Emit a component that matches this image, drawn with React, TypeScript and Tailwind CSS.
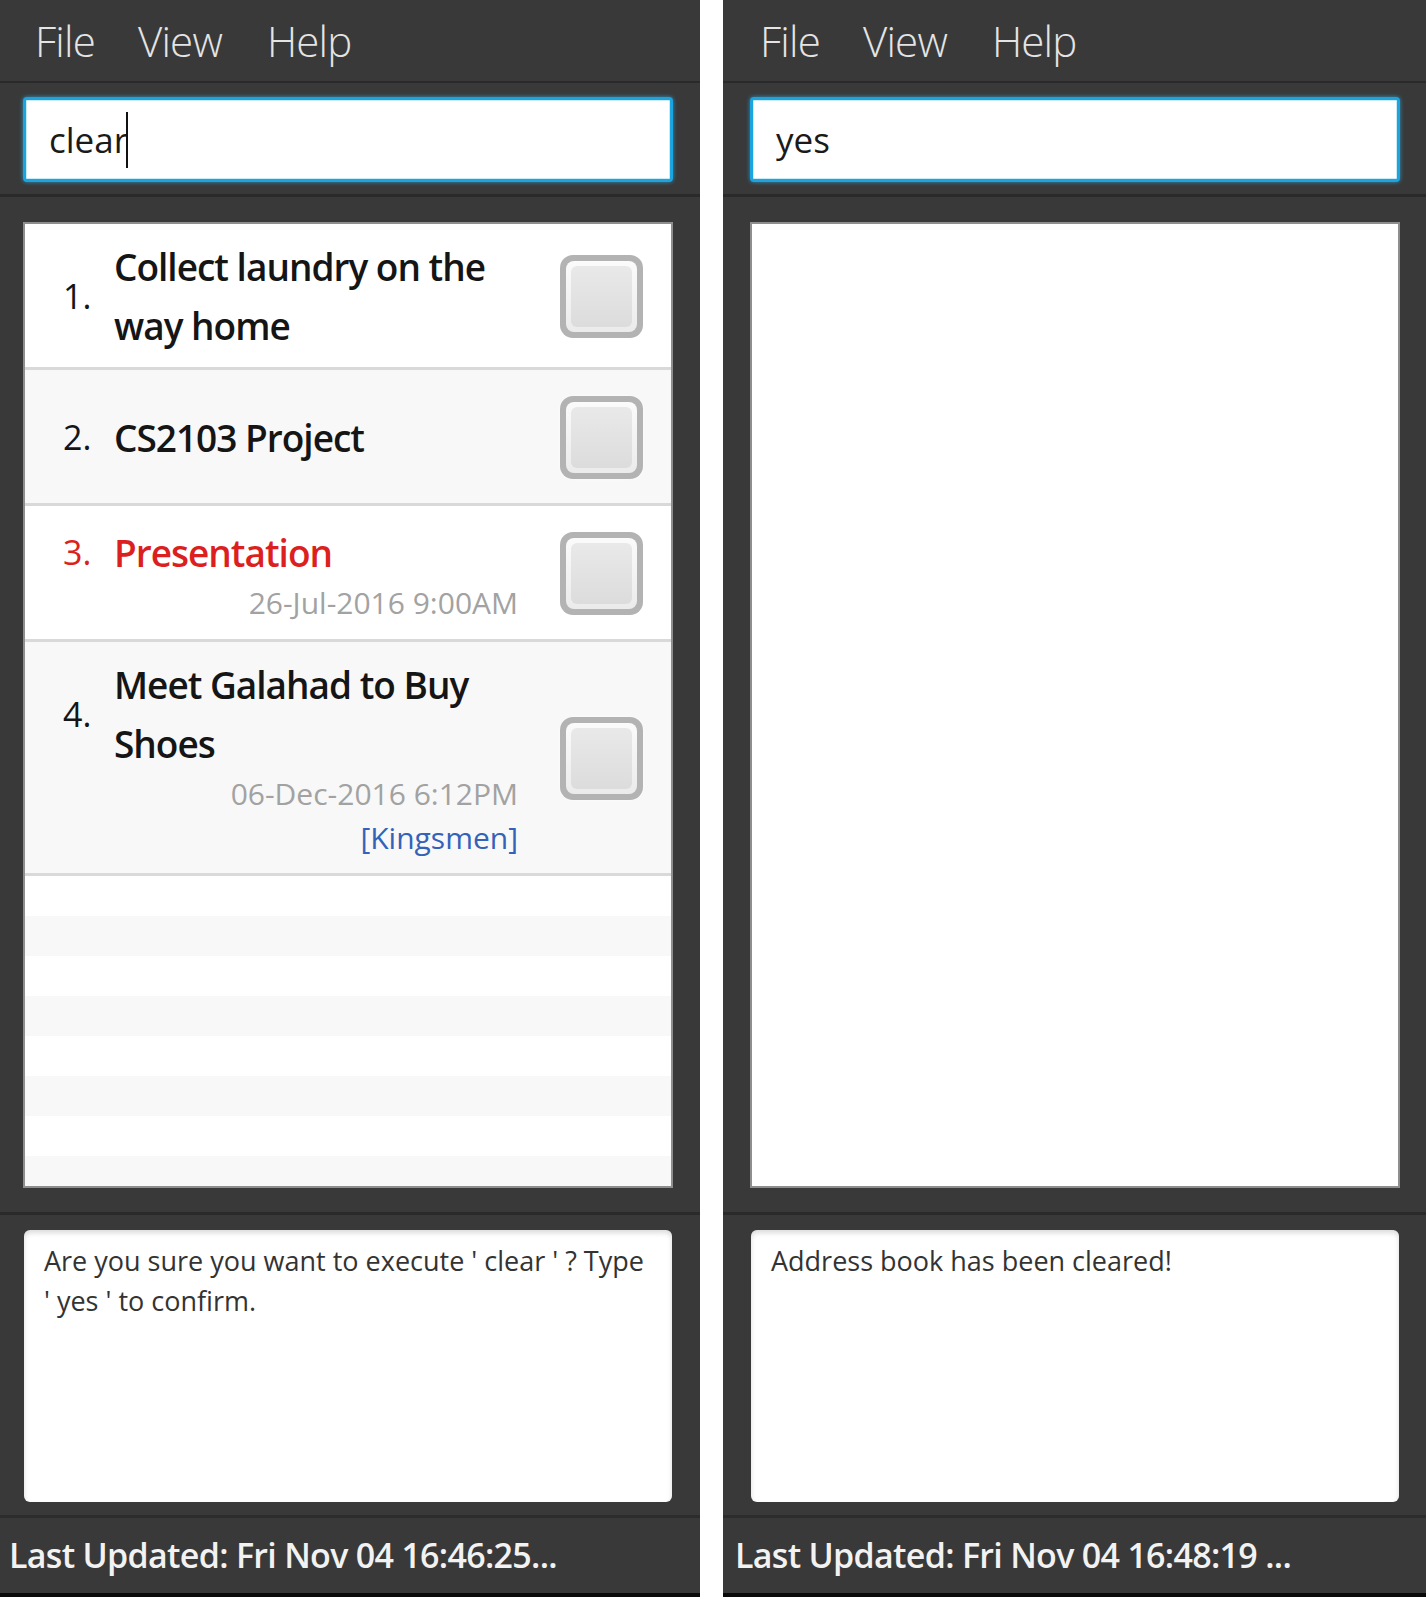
import React from "react";

const FONT = { fontFamily: '"Open Sans", "Noto Sans", sans-serif' };

function Checkbox() {
  return (
    <div className="ml-[42px] w-[83px] h-[83px] shrink-0 rounded-[13px] bg-[#b3b3b3] p-[6px] shadow-[0_0_3px_rgba(255,255,255,0.9)]">
      <div className="w-full h-full rounded-[8px] bg-gradient-to-b from-[#fbfbfb] to-[#ebebeb] p-[5px]">
        <div className="w-full h-full rounded-[6px] bg-gradient-to-b from-[#e9e9e9] to-[#dcdcdc]" />
      </div>
    </div>
  );
}

type RowProps = {
  i: number;
  title: string;
  red?: boolean;
  date?: string;
  tag?: string;
  bg: string;
};

function Row({ i, title, red, date, tag, bg }: RowProps) {
  const color = red ? "text-[#dc1f1f]" : "text-[#151515]";
  return (
    <div
      className={
        "shrink-0 flex items-center min-h-[136px] pt-[13px] pb-[12px] pl-[38px] pr-[28px] border-b-[3px] border-[#d9d9d9] " +
        bg
      }
    >
      <div className="flex-1 flex flex-col min-w-0">
        <div className="flex items-center">
          <span className={"w-[51px] shrink-0 text-[34px] leading-[59px] " + color}>{i}.</span>
          <span
            className={"flex-1 font-semibold text-[37px] tracking-[-1px] leading-[59px] " + color}
          >
            {title}
          </span>
        </div>
        {date && (
          <div className="text-right text-[30px] leading-[42px] text-[#a2a2a2]">{date}</div>
        )}
        {tag && (
          <div className="text-right text-[30px] leading-[46px] text-[#3462b8]">[{tag}]</div>
        )}
      </div>
      <Checkbox />
    </div>
  );
}

function Menu({ pl }: { pl: string }) {
  return (
    <div
      className={
        "h-[83px] shrink-0 flex items-center border-b-[2px] border-[#2a2a2a] text-[42px] tracking-[-0.8px] font-light text-[#e4e4e4] " +
        pl
      }
    >
      <span className="mr-[43px]">File</span>
      <span className="mr-[45px]">View</span>
      <span>Help</span>
    </div>
  );
}

function Panel({
  left,
  inputText,
  cursor,
  list,
  message,
  status,
}: {
  left: boolean;
  inputText: string;
  cursor?: boolean;
  list: React.ReactNode;
  message: React.ReactNode;
  status: string;
}) {
  const padX = left ? "pl-[23px] pr-[27px]" : "pl-[27px] pr-[26px]";
  return (
    <div className={"flex flex-col h-[1597px] bg-[#393939] " + (left ? "w-[700px]" : "w-[703px]")}>
      <Menu pl={left ? "pl-[35px]" : "pl-[37px]"} />
      {/* command box */}
      <div className={"h-[114px] shrink-0 pt-[14px] border-b-[3px] border-[#2a2a2a] " + padX}>
        <div className="h-[85px] rounded-[4px] border-[3px] border-[#1ba4dd] bg-white shadow-[0_0_4px_rgba(40,170,230,0.8),inset_0_0_0_1px_#c9ebf8] flex items-center pl-[23px]">
          <span className="text-[35px] text-[#1a1a1a] leading-none">{inputText}</span>
          {cursor && <span className="inline-block w-[2px] h-[56px] bg-[#111] -ml-[2px]" />}
        </div>
      </div>
      {/* list */}
      <div className={"h-[1018px] shrink-0 pt-[25px] pb-[24px] border-b-[3px] border-[#2a2a2a] " + padX}>
        <div className="h-[966px] bg-white border-2 border-[#8e8e8e] overflow-hidden flex flex-col">
          {list}
        </div>
      </div>
      {/* result */}
      <div className={"h-[303px] shrink-0 pt-[15px] pb-[13px] border-b-[3px] border-[#2c2c2c] " + padX}>
        <div className="h-[272px] mx-[1px] bg-white rounded-[6px] shadow-[inset_0_3px_5px_rgba(0,0,0,0.14)] pt-[11px] px-[20px] text-[27px] leading-[40px] text-[#333333]">
          {message}
        </div>
      </div>
      {/* status */}
      <div
        className={
          "h-[75px] shrink-0 flex items-center font-semibold text-[34px] tracking-[-0.7px] text-[#f2f2f2] " +
          (left ? "pl-[9px]" : "pl-[12px]")
        }
      >
        {status}
      </div>
      <div className="h-[4px] shrink-0 bg-[#0a0a0a]" />
    </div>
  );
}

export default function App() {
  const stripes = [0, 1, 2, 3, 4, 5, 6, 7].map((n) => (
    <div key={n} className={"h-[40px] shrink-0 " + (n % 2 === 0 ? "bg-white" : "bg-[#f8f8f8]")} />
  ));
  const leftList = (
    <>
      <Row i={1} title="Collect laundry on the way home" bg="bg-white" />
      <Row i={2} title="CS2103 Project" bg="bg-[#f8f8f8]" />
      <Row i={3} title="Presentation" red date="26-Jul-2016 9:00AM" bg="bg-white" />
      <Row i={4} title="Meet Galahad to Buy Shoes" date="06-Dec-2016 6:12PM" tag="Kingsmen" bg="bg-[#f8f8f8]" />
      {stripes}
    </>
  );
  return (
    <div className="flex w-[1426px] h-[1597px] bg-white overflow-hidden" style={FONT}>
      <Panel
        left
        inputText="clear"
        cursor
        list={leftList}
        message={
          <>
            Are you sure you want to execute ' clear ' ? Type
            <br />' yes ' to confirm.
          </>
        }
        status="Last Updated: Fri Nov 04 16:46:25..."
      />
      <div className="w-[23px] shrink-0 bg-white" />
      <Panel
        left={false}
        inputText="yes"
        list={null}
        message={<>Address book has been cleared!</>}
        status="Last Updated: Fri Nov 04 16:48:19 ..."
      />
    </div>
  );
}
